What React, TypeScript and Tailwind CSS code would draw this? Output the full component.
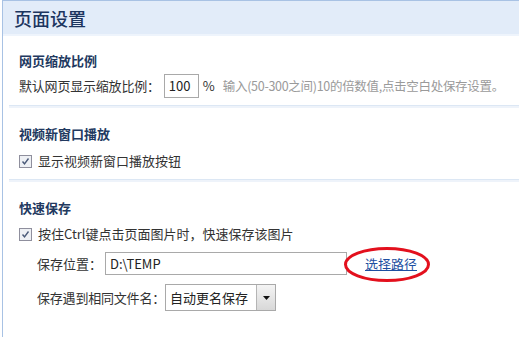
import React from 'react';

const font = { fontFamily: '"Noto Sans CJK SC", "Noto Sans", sans-serif' };

const Checkbox = () => (
    <span className="inline-flex h-[13px] w-[13px] shrink-0 items-center justify-center border border-[#8f8f9d] bg-[#eef0f4]">
        <svg width="9" height="9" viewBox="0 0 9 9">
            <path d="M1.5 4.5 L3.5 6.8 L7.5 1.5" fill="none" stroke="#4a5a78" strokeWidth="1.4" />
        </svg>
    </span>
);

const Separator = () => <div className="ml-[6px] h-[3px] border-t border-[#dce7f4] bg-[#eef3fa]" />;

const App = () => {
    return (
        <div className="relative h-[337px] w-[519px] overflow-hidden bg-white text-[13px] text-[#333]" style={font}>
            <div className="ml-[2px] h-full border-l border-t border-[#a8c2e4]">
                {/* header */}
                <div className="flex h-[35px] items-center border-b-2 border-[#eef4fc] bg-[#e2ecf9] pl-[11px] pt-[2px]">
                    <span className="text-[18px] font-medium text-[#1c355f]">页面设置</span>
                </div>

                {/* 网页缩放比例 */}
                <div className="pb-[7px] pl-[16px] pt-[15px]">
                    <div className="text-[13px] font-bold leading-[20px] text-[#22395f]">网页缩放比例</div>
                    <div className="mt-[3px] flex items-center whitespace-nowrap leading-[20px]">
                        <span className="tracking-[-0.2px]">默认网页显示缩放比例：</span>
                        <span className="ml-[4px] flex h-[24px] w-[35px] shrink-0 items-center border border-[#a9a9a9] pl-[4px] text-[#222]">100</span>
                        <span className="ml-[4px]">%</span>
                        <span className="ml-[8px] text-[12.5px] tracking-[-0.3px] text-[#9a9a9a]">输入(50-300之间)10的倍数值,点击空白处保存设置。</span>
                    </div>
                </div>
                <Separator />

                {/* 视频新窗口播放 */}
                <div className="pb-[8px] pl-[16px] pt-[16px]">
                    <div className="font-bold leading-[20px] text-[#22395f]">视频新窗口播放</div>
                    <div className="mt-[7px] flex items-center gap-[6px] leading-[20px]">
                        <Checkbox />
                        <span>显示视频新窗口播放按钮</span>
                    </div>
                </div>
                <Separator />

                {/* 快速保存 */}
                <div className="pl-[16px] pt-[16px]">
                    <div className="font-bold leading-[20px] text-[#22395f]">快速保存</div>
                    <div className="mt-[6px] flex items-center gap-[6px] leading-[20px]">
                        <Checkbox />
                        <span>按住Ctrl键点击页面图片时，快速保存该图片</span>
                    </div>
                    <div className="mt-[8px] flex items-center whitespace-nowrap pl-[18px] leading-[20px]">
                        <span className="w-[68px]">保存位置：</span>
                        <span className="flex h-[23px] w-[242px] items-center border border-[#a9a9a9] pl-[4px] text-[#222]">D:\TEMP</span>
                        <a className="ml-[18px] text-[#1d4fa1] underline underline-offset-1" href="#">选择路径</a>
                    </div>
                    <div className="mt-[9px] flex items-center whitespace-nowrap pl-[18px] leading-[20px]">
                        <span className="shrink-0 tracking-[-0.2px]">保存遇到相同文件名：</span>
                        <span className="flex h-[27px] w-[111px] shrink-0 items-center border border-[#a9a9a9]">
                            <span className="flex-1 pl-[4px] text-[#222]">自动更名保存</span>
                            <span className="flex h-[25px] w-[19px] items-center justify-center border-l border-[#b5b5b5] bg-gradient-to-b from-[#f4f4f4] to-[#d8d8d8]">
                                <svg width="7" height="4" viewBox="0 0 7 4">
                                    <path d="M0 0 L7 0 L3.5 4 Z" fill="#111" />
                                </svg>
                            </span>
                        </span>
                    </div>
                </div>
            </div>

            {/* red annotation circle */}
            <svg className="absolute left-[343px] top-[246px]" width="88" height="38" viewBox="0 0 88 38">
                <ellipse cx="44" cy="18.5" rx="41.5" ry="16" fill="none" stroke="#e3101d" strokeWidth="3" />
            </svg>
        </div>
    );
};

export default App;
